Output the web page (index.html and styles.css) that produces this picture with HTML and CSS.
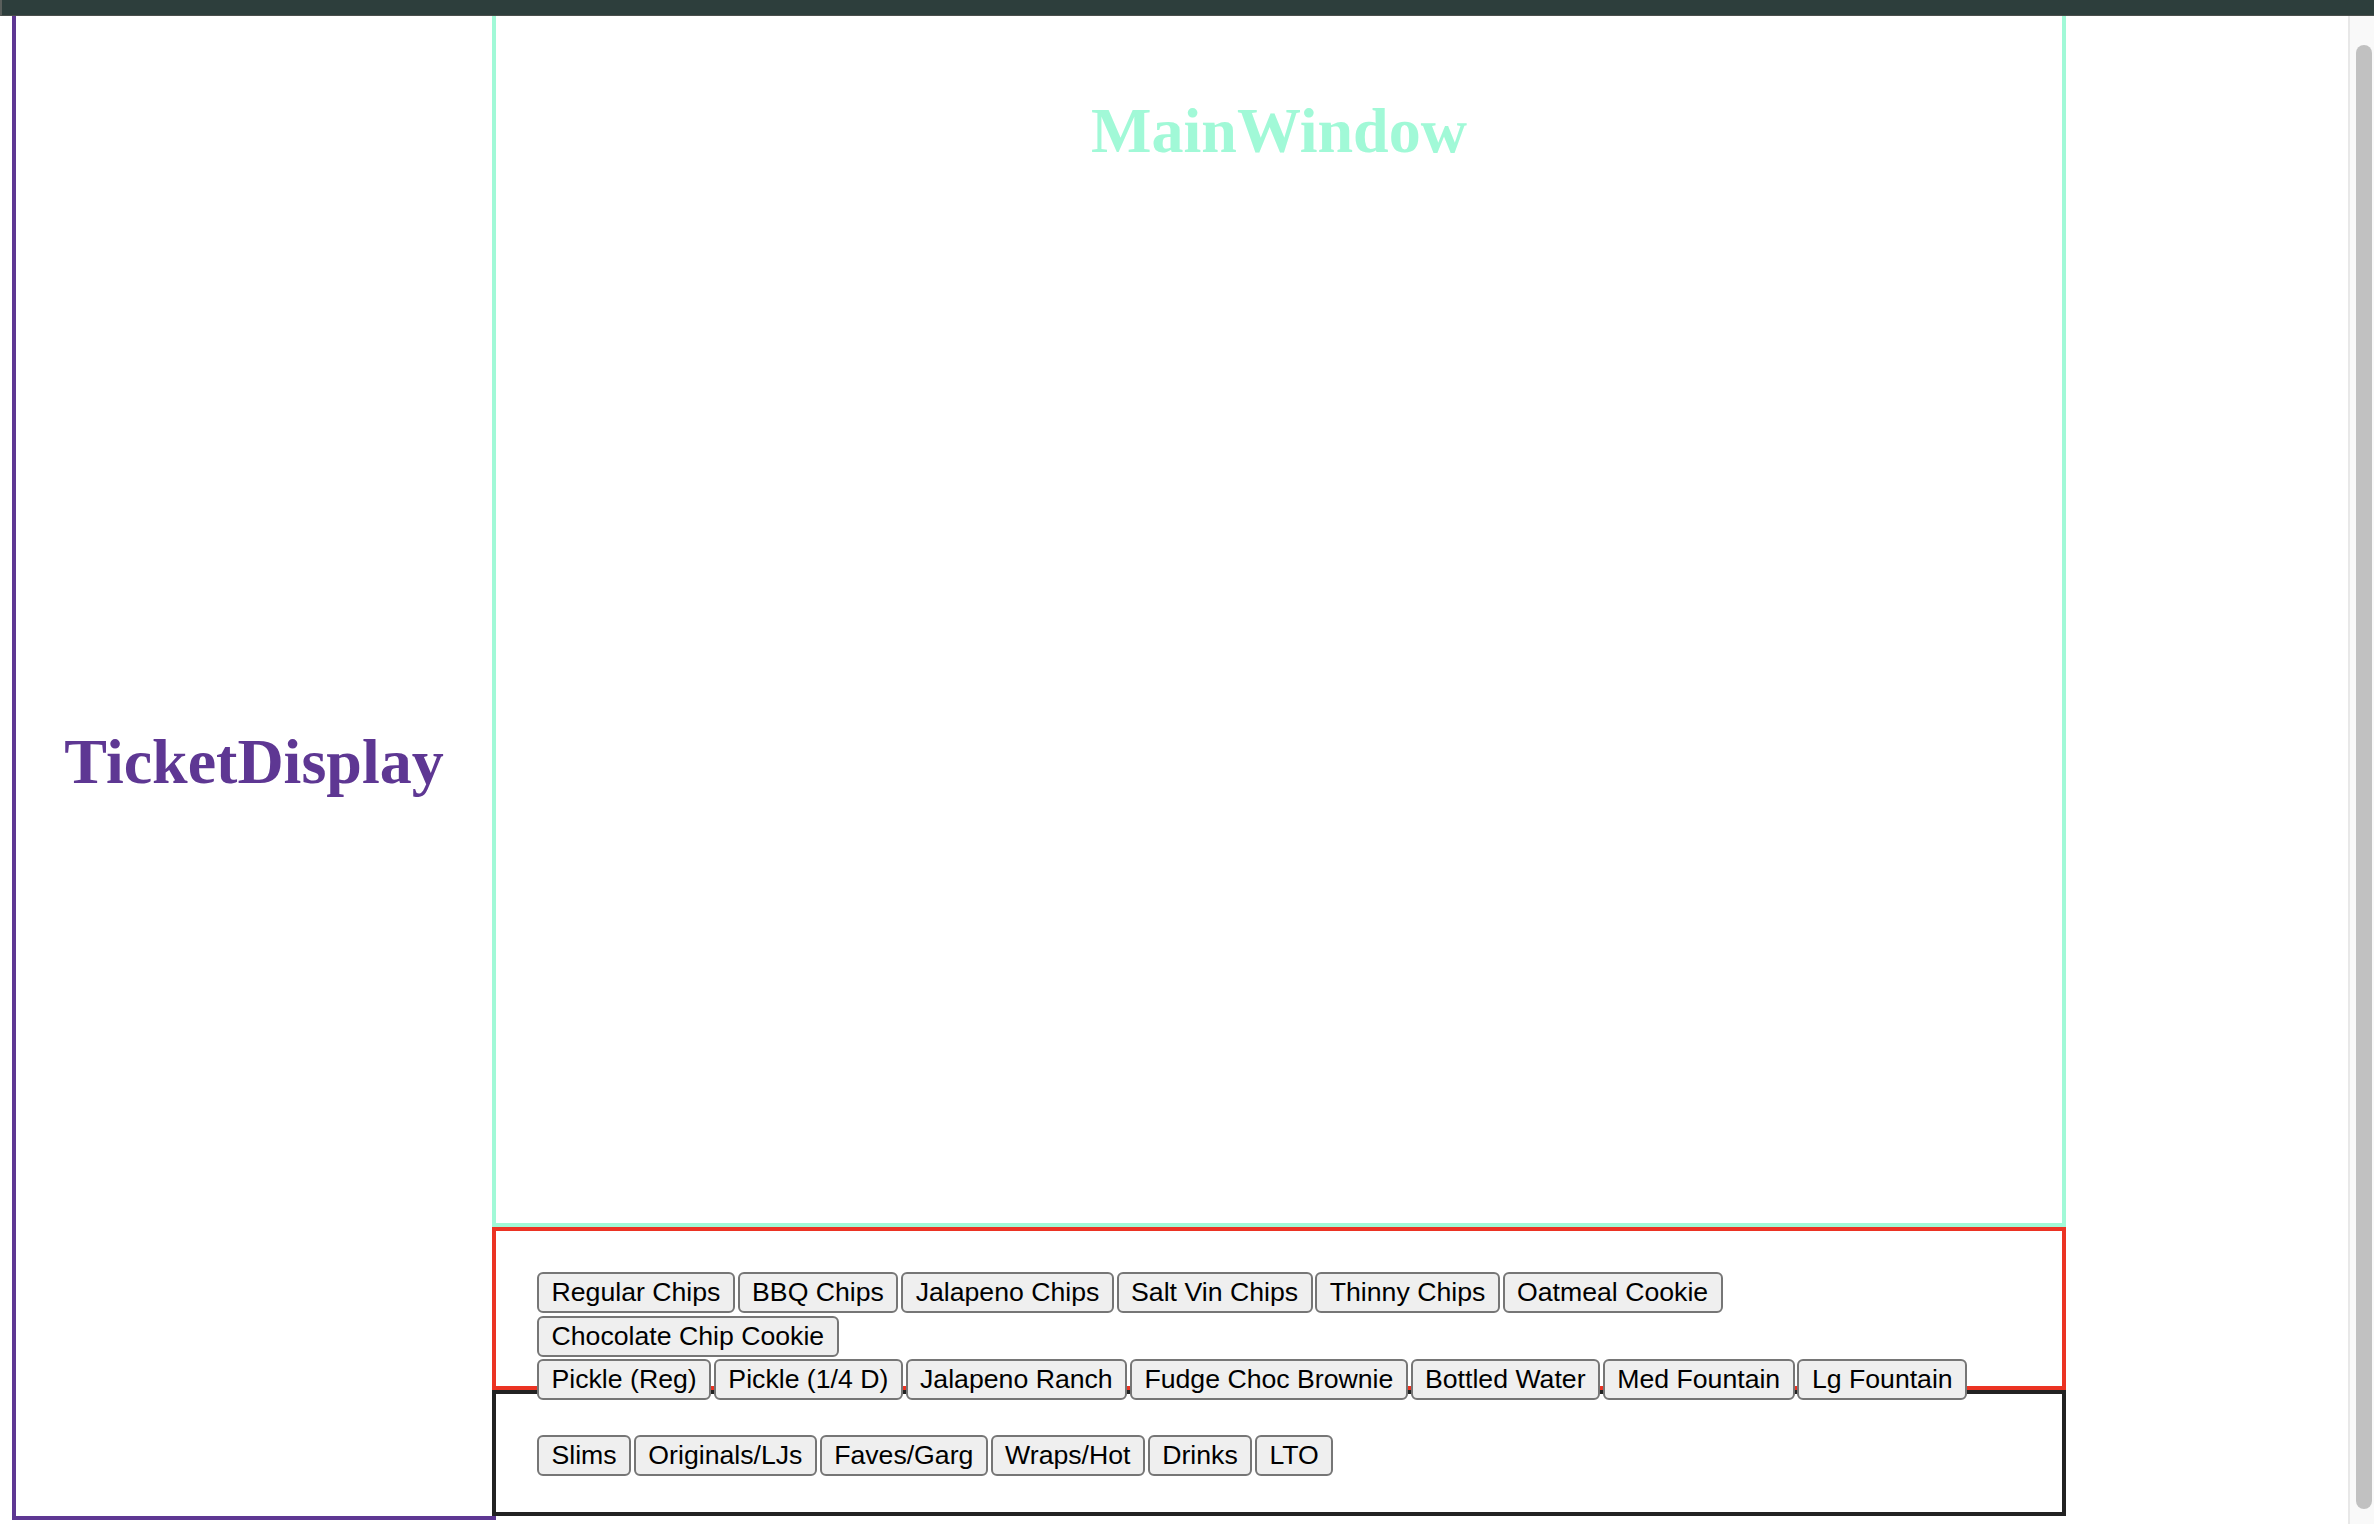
FILE: index.html
```html
<!DOCTYPE html>
<html lang="en">
<head>
<meta charset="utf-8">
<title>POS</title>
<link rel="stylesheet" href="styles.css">
</head>
<body>
<div class="topbar"></div>
<div class="page">
  <div class="content">
    <div class="ticket">
      <h1 class="ticket-title">TicketDisplay</h1>
    </div>
    <div class="main-col">
      <div class="main-window">
        <h1 class="main-title">MainWindow</h1>
      </div>
      <div class="items">
        <div class="group">
          <button class="btn">Regular Chips</button>
          <button class="btn">BBQ Chips</button>
          <button class="btn">Jalapeno Chips</button>
          <button class="btn">Salt Vin Chips</button>
          <button class="btn">Thinny Chips</button>
          <button class="btn">Oatmeal Cookie</button>
          <button class="btn">Chocolate Chip Cookie</button>
        </div>
        <div class="group">
          <button class="btn">Pickle (Reg)</button>
          <button class="btn">Pickle (1/4 D)</button>
          <button class="btn">Jalapeno Ranch</button>
          <button class="btn">Fudge Choc Brownie</button>
          <button class="btn">Bottled Water</button>
          <button class="btn">Med Fountain</button>
          <button class="btn">Lg Fountain</button>
        </div>
      </div>
      <div class="categories">
        <div class="group">
          <button class="btn">Slims</button>
          <button class="btn">Originals/LJs</button>
          <button class="btn">Faves/Garg</button>
          <button class="btn">Wraps/Hot</button>
          <button class="btn">Drinks</button>
          <button class="btn">LTO</button>
        </div>
      </div>
    </div>
  </div>
  <div class="scrollbar"><div class="thumb"></div></div>
</div>
</body>
</html>
```
FILE: styles.css
```css
* { box-sizing: border-box; }
html, body {
  margin: 0;
  padding: 0;
  background: #ffffff;
  overflow: hidden;
}
body {
  width: 2374px;
  height: 1524px;
  font-family: "Liberation Serif", "Times New Roman", serif;
}
.topbar {
  height: 16px;
  background: #2d3e3c;
  border-bottom: 1px solid #4a4f4c;
  border-left: 2px solid #5a5f5c;
}
.page {
  display: flex;
  height: 1508px;
}
.content {
  flex: 1;
  display: flex;
  align-items: flex-start;
  padding-left: 12px;
}
.ticket {
  width: 484px;
  height: 1504px;
  border-left: 4px solid #5e3793;
  border-right: 4px solid #5e3793;
  border-bottom: 4px solid #5e3793;
  display: flex;
  align-items: center;
  justify-content: center;
  padding-bottom: 8px;
}
.ticket-title {
  margin: 0;
  font-size: 64px;
  line-height: 64px;
  font-weight: bold;
  color: #5e3793;
}
.main-col {
  width: 1574px;
  margin-left: -4px;
  display: flex;
  flex-direction: column;
}
.main-window {
  height: 1211px;
  border: 4px solid #a1f9d7;
  border-top: 0;
  padding-top: 83px;
  text-align: center;
}
.main-title {
  margin: 0;
  font-size: 64px;
  line-height: 64px;
  font-weight: bold;
  color: #a1f9d7;
}
.items {
  height: 163px;
  border: 4px solid #eb3323;
  padding: 41px 60px 0 41px;
  display: flex;
  flex-direction: column;
  gap: 2.7px;
  overflow: visible;
}
.categories {
  height: 126px;
  border: 4px solid #222222;
  padding: 41px 60px 0 41px;
}
.group {
  display: flex;
  flex-wrap: wrap;
  gap: 2.7px;
}
.btn {
  z-index: 1;
  font-family: "Liberation Sans", Arial, sans-serif;
  font-size: 26.6667px;
  line-height: normal;
  color: #000000;
  background: #efefef;
  border: 2px solid #767676;
  border-radius: 6px;
  padding: 3px 12.5px;
  margin: 0;
  white-space: nowrap;
}
.scrollbar {
  width: 26px;
  height: 1508px;
  background: #f9f9f9;
  border-left: 2px solid #e8e8e8;
  padding: 29px 2px 15px 6px;
  display: flex;
}
.thumb {
  flex: 1;
  background: #c1c1c1;
  border-radius: 8px;
}
```
